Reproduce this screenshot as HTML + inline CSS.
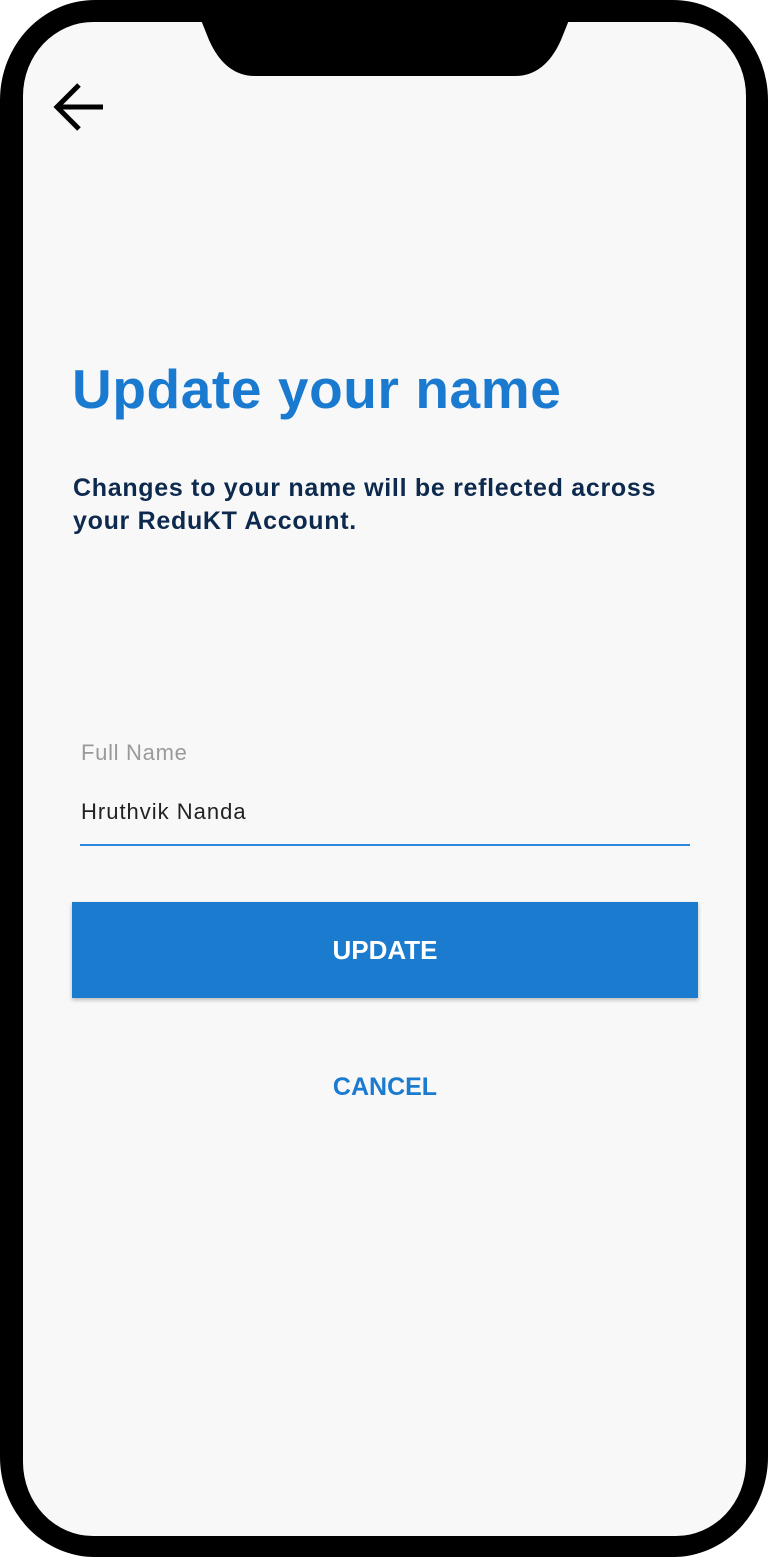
<!DOCTYPE html>
<html><head><style>
html,body{margin:0;padding:0;background:#fff;}
body{width:770px;height:1558px;position:relative;overflow:hidden;font-family:"Liberation Sans",sans-serif;}
.outer{position:absolute;left:0;top:0;width:768px;height:1557px;background:#000;border-radius:95px/100px;}
.inner{position:absolute;left:23px;top:22px;width:723px;height:1514px;background:#f8f8f8;border-radius:70px/74px;overflow:hidden;}
.notch{position:absolute;left:193px;top:0;width:384px;height:76px;}
.t{position:absolute;white-space:nowrap;}
</style></head><body>
<div class="outer"></div>
<div class="inner"></div>
<svg class="notch" viewBox="0 0 384 76" width="384" height="76"><path d="M0 0 L384 0 L368 40 Q352 76 322 76 L62 76 Q32 76 16 40 Z" fill="#000"/></svg>
<svg style="position:absolute;left:52px;top:82px" width="54" height="52" viewBox="0 0 54 52"><path d="M27 3 L5 25 L27 47 M5 25 L51 25" fill="none" stroke="#000" stroke-width="5"/></svg>
<div class="t" style="left:72px;top:357px;font-size:55px;color:#1a7acf;font-weight:bold;letter-spacing:0.6px;">Update your name</div>
<div class="t" style="left:73px;top:472px;font-size:25px;color:#0d2a4e;font-weight:bold;line-height:33px;letter-spacing:0.7px;">Changes to your name will be reflected across<br>your ReduKT Account.</div>
<div class="t" style="left:81px;top:740px;font-size:22px;color:#9a9a9a;letter-spacing:0.7px;">Full Name</div>
<div class="t" style="left:81px;top:799px;font-size:22px;color:#222;letter-spacing:1px;">Hruthvik Nanda</div>
<div style="position:absolute;left:80px;top:844px;width:610px;height:2px;background:#2a8ae0;"></div>
<div style="position:absolute;left:72px;top:902px;width:626px;height:96px;background:#1a7bcf;box-shadow:0 2px 4px rgba(0,0,0,0.25);"></div>
<div class="t" style="left:72px;top:935px;width:626px;text-align:center;font-size:26px;color:#fff;font-weight:bold;">UPDATE</div>
<div class="t" style="left:72px;top:1073px;width:626px;text-align:center;font-size:25px;color:#1a7bcf;font-weight:bold;">CANCEL</div>
</body></html>
